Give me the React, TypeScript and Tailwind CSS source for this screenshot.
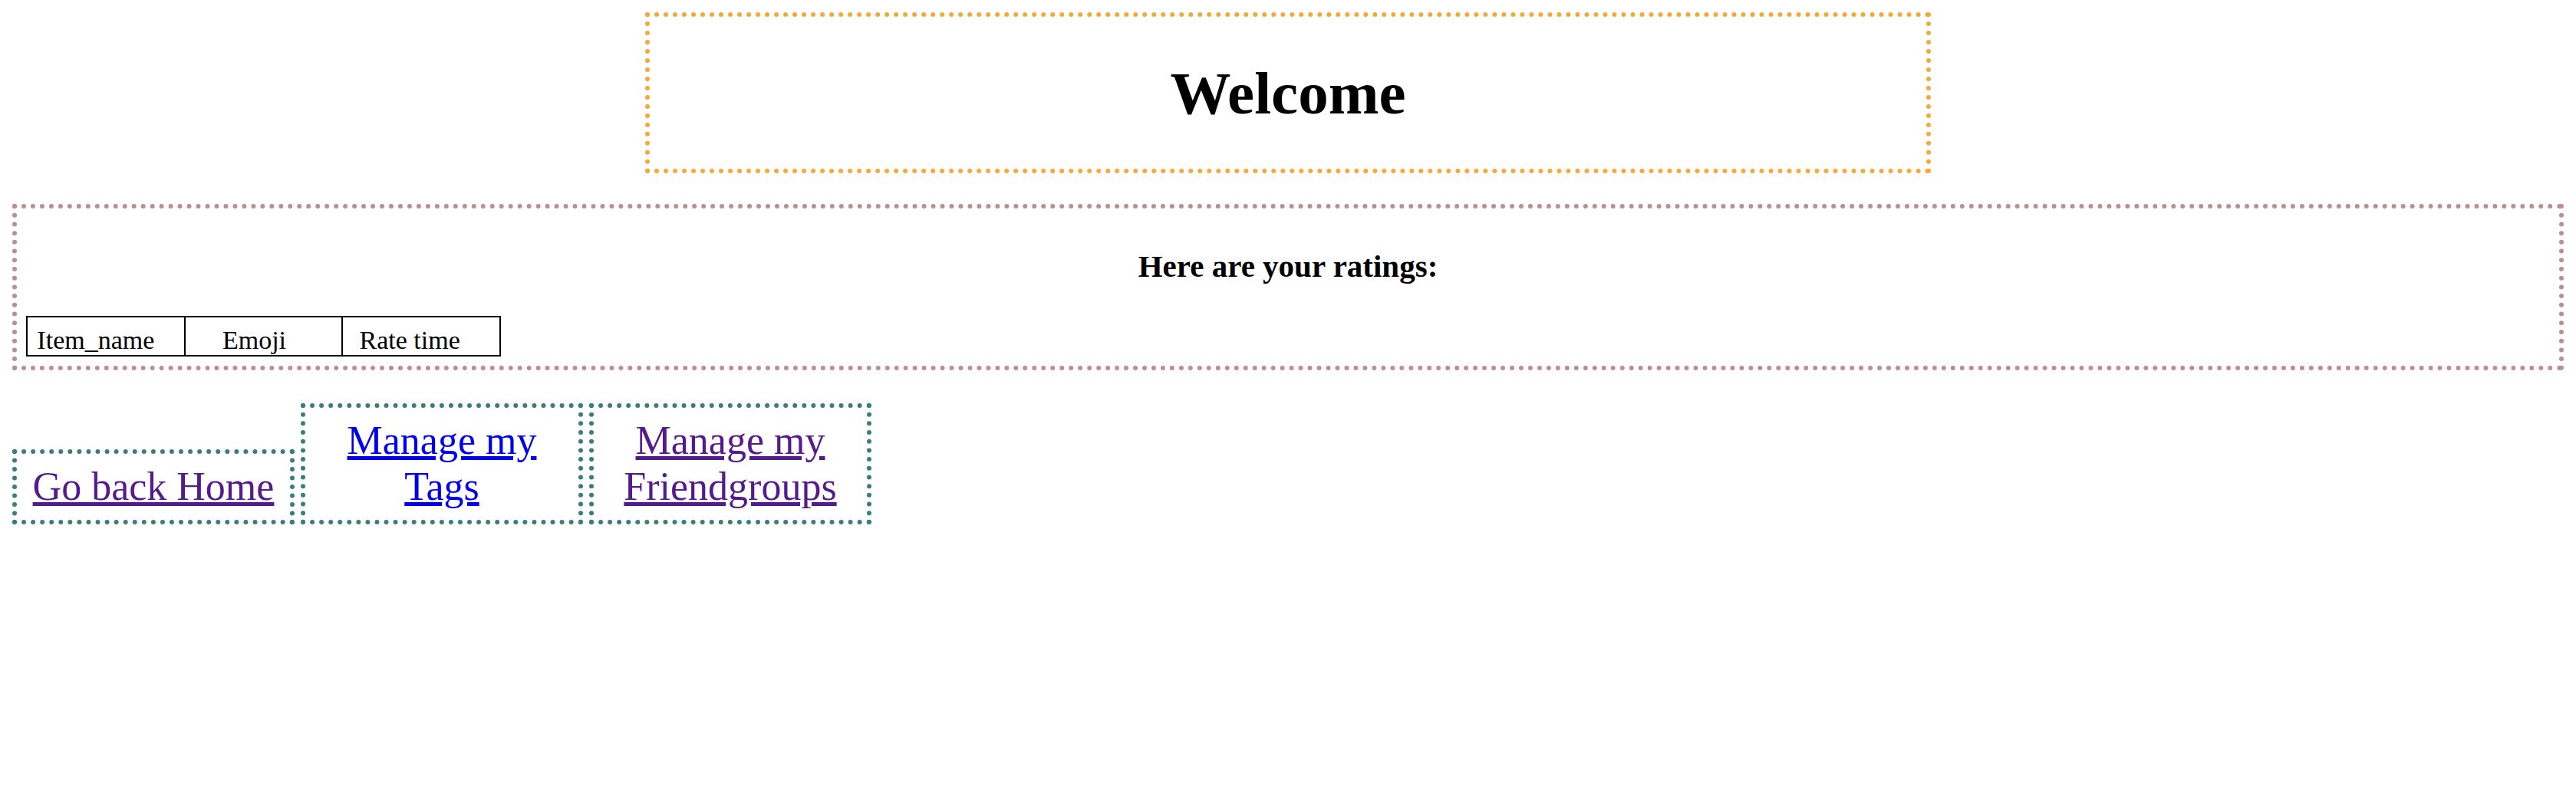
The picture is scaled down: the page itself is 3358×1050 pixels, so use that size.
export default function App() {
  return (
    <div className="min-h-screen bg-white px-[16px] pt-[16px] text-black [font-family:'Liberation_Serif','Times_New_Roman',serif]">
      {/* Welcome banner */}
      <div className="mx-auto flex h-[210px] w-[1676px] items-center justify-center border-[6px] border-dotted border-[#f4a93b]">
        <h1 className="text-[79px] font-bold leading-[87px]">Welcome</h1>
      </div>

      {/* Ratings */}
      <div className="mt-[40px] border-[6px] border-dotted border-[#bc8f8f] px-[12px] pb-[12px] pt-[52px]">
        <h3 className="text-center text-[41px] font-bold leading-[46px]">Here are your ratings:</h3>
        <table className="mt-[42px] w-[619px] table-fixed border-collapse text-[34px]">
          <tbody>
            <tr>
              <td className="h-[51px] border-2 border-black p-0 pr-[26px] text-center align-bottom leading-[38px]">Item_name</td>
              <td className="h-[51px] border-2 border-black p-0 pr-[24px] text-center align-bottom leading-[38px]">Emoji</td>
              <td className="h-[51px] border-2 border-black p-0 pr-[30px] text-center align-bottom leading-[38px]">Rate time</td>
            </tr>
          </tbody>
        </table>
      </div>

      {/* Links */}
      <div className="mt-[43px] flex items-end gap-[8px] text-[52px] leading-[60px]">
        <div className="w-[368px] border-[6px] border-dotted border-[#3a7d7a] p-[13px] text-center">
          <a href="#" className="text-[#551a8b] underline">Go back Home</a>
        </div>
        <div className="w-[368px] border-[6px] border-dotted border-[#3a7d7a] p-[13px] text-center">
          <a href="#" className="text-[#0000ee] underline">Manage my Tags</a>
        </div>
        <div className="w-[368px] border-[6px] border-dotted border-[#3a7d7a] p-[13px] text-center">
          <a href="#" className="text-[#551a8b] underline">Manage my Friendgroups</a>
        </div>
      </div>
    </div>
  );
}
